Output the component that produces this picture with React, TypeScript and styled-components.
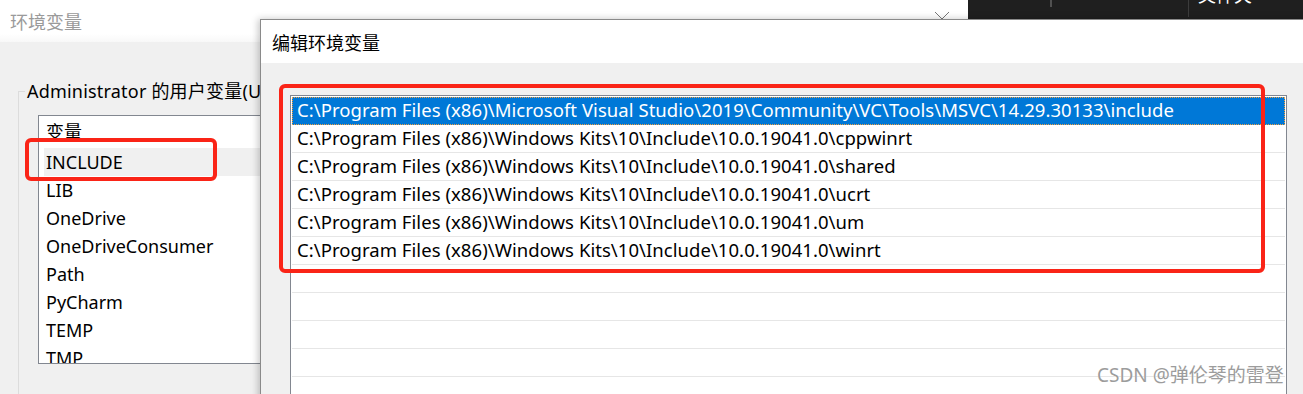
import React from 'react';
import styled, { createGlobalStyle } from 'styled-components';

const GlobalStyle = createGlobalStyle`
  html, body {
    margin: 0;
    padding: 0;
    background: #f0f0f0;
  }
  body {
    font-family: "Noto Sans", "Noto Sans CJK SC", sans-serif;
  }
`;

const varNames = ['INCLUDE', 'LIB', 'OneDrive', 'OneDriveConsumer', 'Path', 'PyCharm', 'TEMP', 'TMP'];

const paths = [
  'C:\\Program Files (x86)\\Microsoft Visual Studio\\2019\\Community\\VC\\Tools\\MSVC\\14.29.30133\\include',
  'C:\\Program Files (x86)\\Windows Kits\\10\\Include\\10.0.19041.0\\cppwinrt',
  'C:\\Program Files (x86)\\Windows Kits\\10\\Include\\10.0.19041.0\\shared',
  'C:\\Program Files (x86)\\Windows Kits\\10\\Include\\10.0.19041.0\\ucrt',
  'C:\\Program Files (x86)\\Windows Kits\\10\\Include\\10.0.19041.0\\um',
  'C:\\Program Files (x86)\\Windows Kits\\10\\Include\\10.0.19041.0\\winrt',
];

const App = () => {
  return (
    <>
      <GlobalStyle />
      <Desktop>
        <EnvWindow>
          <EnvTitleBar>
            <span>环境变量</span>
            <CloseIcon width="16" height="16" viewBox="0 0 16 16">
              <path d="M1 1 L15 15 M15 1 L1 15" stroke="#777" strokeWidth="1" fill="none" />
            </CloseIcon>
          </EnvTitleBar>
          <EnvBody>
            <GroupBox>
              <GroupLabel>Administrator 的用户变量(U)</GroupLabel>
              <VarList>
                <VarHeader>变量</VarHeader>
                {varNames.map((name, i) => (
                  <VarRow key={name} $active={i === 0}>{name}</VarRow>
                ))}
              </VarList>
            </GroupBox>
          </EnvBody>
        </EnvWindow>

        <DarkApp>
          <DarkCell $w={82} />
          <DarkDivider $color="#505050" $h={7} $w={2} />
          <DarkCell $w={136} />
          <DarkDivider $color="#3c3c3c" $h={17} $w={1} />
          <DarkLabel>文件夹</DarkLabel>
        </DarkApp>

        <EditDialog>
          <DialogTitle>编辑环境变量</DialogTitle>
          <DialogBody>
            <PathList>
              {paths.map((p, i) => (
                <PathRow key={p} $selected={i === 0}>{p}</PathRow>
              ))}
              {Array.from({ length: 6 }).map((_, i) => (
                <PathRow key={'empty' + i} />
              ))}
            </PathList>
          </DialogBody>
        </EditDialog>

        <Mark $x={25} $y={138} $w={192} $h={43} />
        <Mark $x={279} $y={84} $w={986} $h={189} />

        <Watermark>CSDN @弹伦琴的雷登</Watermark>
      </Desktop>
    </>
  );
};

const Desktop = styled.div`
  position: relative;
  width: 1303px;
  height: 394px;
  overflow: hidden;
  background: #f0f0f0;
`;

const EnvWindow = styled.div`
  position: absolute;
  left: 0;
  top: 0;
  width: 968px;
  height: 394px;
  display: flex;
  flex-direction: column;
  background: #f0f0f0;
`;

const EnvTitleBar = styled.div`
  height: 42px;
  flex: none;
  display: flex;
  align-items: center;
  justify-content: space-between;
  padding: 0 18px 0 10px;
  background: linear-gradient(#fff 80%, #f8f8f8);
  color: #9a9a9a;
  font-size: 18px;
`;

const CloseIcon = styled.svg`
  align-self: flex-start;
  margin-top: 11px;
`;

const EnvBody = styled.div`
  flex: 1;
  padding: 49px 0 0 18px;
`;

const GroupBox = styled.div`
  height: 400px;
  padding-left: 19px;
  border-top: 1px solid #dcdcdc;
  border-left: 1px solid #dcdcdc;
`;

const GroupLabel = styled.div`
  width: fit-content;
  margin: -13px 0 0 -13px;
  padding: 0 2px;
  background: #f0f0f0;
  color: #000;
  font-size: 18px;
  letter-spacing: 0.2px;
  line-height: 24px;
  white-space: nowrap;
`;

const VarList = styled.div`
  width: 240px;
  height: 249px;
  margin-top: 12px;
  box-sizing: border-box;
  border: 1px solid #828790;
  background: #fff;
  overflow: hidden;
  padding-left: 5px;
  font-size: 18px;
  color: #000;
`;

const VarHeader = styled.div`
  height: 32px;
  line-height: 32px;
  padding-left: 2px;
`;

const VarRow = styled.div<{ $active?: boolean }>`
  height: 28px;
  line-height: 28px;
  padding-left: 2px;
  background: ${(p) => (p.$active ? '#f0f0f0' : 'transparent')};
`;

const DarkApp = styled.div`
  position: absolute;
  left: 968px;
  top: 0;
  width: 335px;
  height: 40px;
  display: flex;
  align-items: flex-start;
  background: #1f1f1f;
  overflow: hidden;
`;

const DarkCell = styled.div<{ $w: number }>`
  width: ${(p) => p.$w}px;
  height: 100%;
`;

const DarkDivider = styled.div<{ $color: string; $h: number; $w: number }>`
  width: ${(p) => p.$w}px;
  height: ${(p) => p.$h}px;
  background: ${(p) => p.$color};
`;

const DarkLabel = styled.div`
  margin: -19px 0 0 9px;
  color: #fff;
  font-size: 18px;
  line-height: 28px;
`;

const EditDialog = styled.div`
  position: absolute;
  left: 260px;
  top: 19px;
  width: 1080px;
  height: 420px;
  display: flex;
  flex-direction: column;
  border: 1px solid #8a8a8a;
  background: #f0f0f0;
  box-shadow: -2px 0 7px rgba(0, 0, 0, 0.22);
`;

const DialogTitle = styled.div`
  height: 43px;
  flex: none;
  display: flex;
  align-items: center;
  padding-left: 11px;
  background: #fff;
  color: #000;
  font-size: 18px;
`;

const DialogBody = styled.div`
  flex: 1;
  padding: 32px 0 0 29px;
`;

const PathList = styled.div`
  width: 997px;
  height: 320px;
  box-sizing: border-box;
  border: 1px solid #828790;
  background: #fff;
  padding: 1px;
  font-size: 18.5px;
  letter-spacing: 0.05px;
  color: #000;
`;

const PathRow = styled.div<{ $selected?: boolean }>`
  height: 28px;
  box-sizing: border-box;
  line-height: 26px;
  padding-left: 5px;
  white-space: nowrap;
  border-bottom: 1px solid ${(p) => (p.$selected ? '#0078d7' : '#e6e6e6')};
  background: ${(p) => (p.$selected ? '#0078d7' : 'transparent')};
  color: ${(p) => (p.$selected ? '#fff' : '#000')};
  outline: ${(p) => (p.$selected ? '1px dotted #f0a040' : 'none')};
  outline-offset: -1px;
`;

const Mark = styled.div<{ $x: number; $y: number; $w: number; $h: number }>`
  position: absolute;
  left: ${(p) => p.$x}px;
  top: ${(p) => p.$y}px;
  width: ${(p) => p.$w}px;
  height: ${(p) => p.$h}px;
  box-sizing: border-box;
  border: 4px solid #fa2417;
  border-radius: 6px;
  pointer-events: none;
`;

const Watermark = styled.div`
  position: absolute;
  left: 1097px;
  top: 361px;
  font-size: 19px;
  line-height: 28px;
  color: #9c9c9c;
  text-shadow: 0 0 1px #fff;
  white-space: nowrap;
`;

export default App;
